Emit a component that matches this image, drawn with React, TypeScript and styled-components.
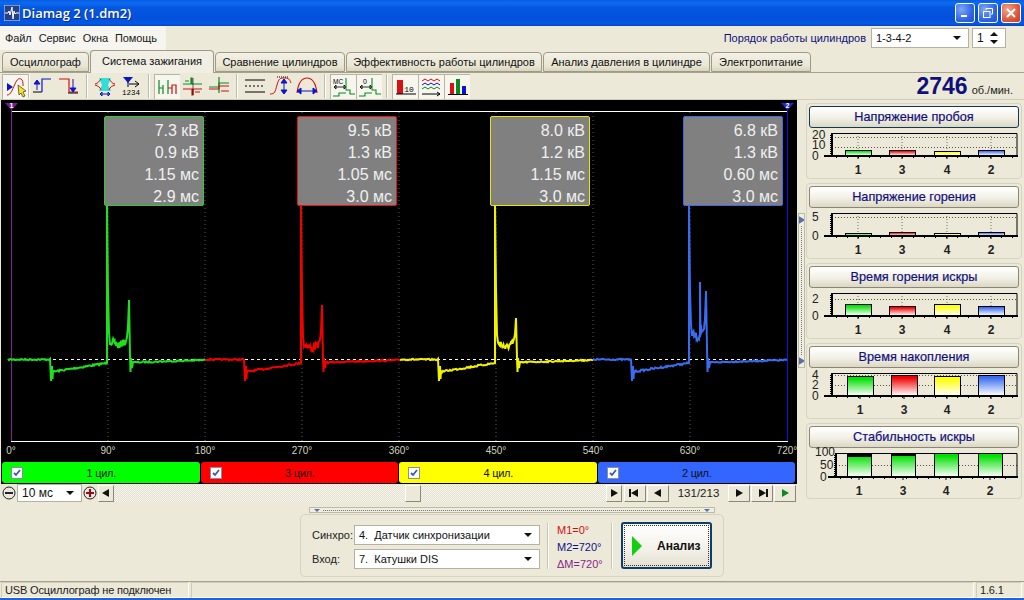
import React from "react";
import styled, { createGlobalStyle } from "styled-components";

const GlobalStyle = createGlobalStyle`
  html, body {
    margin: 0;
    padding: 0;
    background: #ece9d8;
  }
  * {
    box-sizing: border-box;
  }
`;

const FONT = `"Liberation Sans", Arial, sans-serif`;

const Window = styled.div`
  width: 1024px;
  height: 600px;
  overflow: hidden;
  display: flex;
  flex-direction: column;
  background: #ece9d8;
  font-family: ${FONT};
  font-size: 11px;
  color: #111;
  border-bottom: 2px solid #1f64d8;
`;

const TitleBar = styled.div`
  height: 26px;
  flex: none;
  display: flex;
  align-items: center;
  padding: 0 3px 0 4px;
  gap: 2px;
  background: linear-gradient(180deg, #0a5ce0 0%, #0b6bf2 12%, #0557e0 30%, #0350dc 70%, #0459e6 90%, #0346c4 100%);
`;

const TitleText = styled.div`
  flex: 1;
  color: #fff;
  font-family: "Open Sans", sans-serif;
  font-weight: 600;
  font-size: 13px;
  text-shadow: 1px 1px 0 #0a2f90;
`;

const CaptionButton = styled.div<{ $close?: boolean }>`
  width: 20px;
  height: 20px;
  border: 1px solid #fff;
  border-radius: 3px;
  display: flex;
  align-items: center;
  justify-content: center;
  background: ${(p) =>
    p.$close
      ? "radial-gradient(circle at 30% 30%, #f0a58c, #e0583a 60%, #c53a1a)"
      : "radial-gradient(circle at 30% 30%, #7fa6f5, #2f66e4 60%, #2450c8)"};
`;

const CaptionRow = styled.div`
  display: flex;
  gap: 3px;
`;

const HeaderRow = styled.div`
  height: 24px;
  flex: none;
  display: flex;
  align-items: center;
`;

const MenuBar = styled.div`
  width: 166px;
  height: 24px;
  display: flex;
  align-items: center;
  gap: 7px;
  padding-left: 5px;
  background: #f6f5f0;
`;

const MenuItem = styled.span`
  font-size: 11px;
  letter-spacing: -0.1px;
  color: #1a1a1a;
`;

const OrderBlock = styled.div`
  margin-left: auto;
  margin-right: 18px;
  display: flex;
  align-items: center;
`;

const OrderLabel = styled.span`
  color: #10107c;
  font-size: 11px;
  margin-right: 5px;
`;

const Combo = styled.div<{ $w: number; $h?: number; $size?: number }>`
  width: ${(p) => p.$w}px;
  height: ${(p) => p.$h ?? 20}px;
  background: #fff;
  border: 1px solid #b5b2a4;
  display: flex;
  align-items: center;
  justify-content: space-between;
  padding: 0 5px 0 4px;
  font-size: ${(p) => p.$size ?? 11}px;
  color: #111;
`;

const DownMark = styled.span`
  width: 0;
  height: 0;
  border-left: 4px solid transparent;
  border-right: 4px solid transparent;
  border-top: 4px solid #111;
  margin-right: 2px;
`;

const SpinBox = styled(Combo)`
  margin-left: 3px;
`;

const SpinMarks = styled.div`
  display: flex;
  flex-direction: column;
  gap: 4px;
`;

const UpMark = styled.span`
  width: 0;
  height: 0;
  border-left: 4px solid transparent;
  border-right: 4px solid transparent;
  border-bottom: 4px solid #111;
  margin-right: 2px;
`;

const TabStrip = styled.div`
  height: 22px;
  flex: none;
  display: flex;
  align-items: flex-end;
  padding-left: 2px;
  gap: 1px;
  position: relative;
  z-index: 1;
`;

const Tab = styled.div<{ $w: number; $active?: boolean }>`
  width: ${(p) => p.$w}px;
  height: ${(p) => (p.$active ? 23 : 20)}px;
  margin-bottom: ${(p) => (p.$active ? -1 : 0)}px;
  display: flex;
  align-items: center;
  justify-content: center;
  padding-bottom: ${(p) => (p.$active ? 3 : 0)}px;
  border: 1px solid #9d9a86;
  border-bottom: ${(p) => (p.$active ? "none" : "1px solid #9d9a86")};
  border-radius: 4px 4px 0 0;
  background: ${(p) => (p.$active ? "#f1efe4" : "linear-gradient(180deg,#f3f1e6 0%,#e9e6d4 70%,#d8d4bd 100%)")};
  font-size: 11px;
  white-space: nowrap;
`;

const ToolRow = styled.div`
  height: 28px;
  flex: none;
  display: flex;
  align-items: center;
  padding-left: 2px;
  border-top: 1px solid #a5a28e;
  border-bottom: 1px solid #cfccb9;
`;

const ToolGroup = styled.div`
  display: flex;
`;

const ToolButton = styled.div<{ $on?: boolean }>`
  width: 26px;
  height: 25px;
  display: flex;
  align-items: center;
  justify-content: center;
  background: ${(p) => (p.$on ? "#f6f5ee" : "transparent")};
  ${(p) => (p.$on ? "border-left:1px solid #b8b5a4;border-top:1px solid #b8b5a4;" : "")}
`;

const ToolSep = styled.div<{ $tight?: boolean }>`
  width: 2px;
  height: 24px;
  margin: 0 ${(p) => (p.$tight ? 0 : 4)}px;
  border-left: 1px solid #bdbaa8;
  border-right: 1px solid #fff;
`;

const Rpm = styled.div`
  margin-left: auto;
  margin-right: 11px;
  display: flex;
  align-items: baseline;
  gap: 4px;
`;

const RpmValue = styled.span`
  font-size: 23px;
  font-weight: 700;
  color: #10107c;
`;

const RpmUnit = styled.span`
  font-size: 11px;
  color: #222;
`;

const MainRow = styled.div`
  height: 402px;
  flex: none;
  display: flex;
`;

const LeftColumn = styled.div`
  width: 797px;
  flex: none;
  padding-left: 1px;
  display: flex;
  flex-direction: column;
`;

const Scope = styled.div`
  background: #000;
  height: 384px;
  flex: none;
  display: flex;
  flex-direction: column;
`;

const PlotArea = styled.div`
  position: relative;
  height: 342px;
  flex: none;
`;

const PlotSvg = styled.svg`
  display: block;
`;

const ValueBox = styled.div<{ $left: number; $color: string }>`
  position: absolute;
  left: ${(p) => p.$left}px;
  top: 16px;
  width: 100px;
  height: 90px;
  background: #808080;
  border: 1px solid ${(p) => p.$color};
  border-radius: 2px;
  padding: 3px 4px 0 0;
  color: #f0f0f0;
  font-size: 16px;
  line-height: 22px;
  text-align: right;
`;

const AxisRow = styled.div`
  height: 20px;
  flex: none;
  display: flex;
  justify-content: space-between;
  align-items: center;
  padding-bottom: 4px;
`;

const AxisLabel = styled.span`
  width: 20px;
  display: flex;
  justify-content: center;
  white-space: nowrap;
  font-size: 10px;
  color: #cfd6bd;
`;

const ChannelRow = styled.div`
  height: 21px;
  flex: none;
  display: flex;
  gap: 1px;
  padding: 0 2px 0 1px;
`;

const Channel = styled.div<{ $bg: string }>`
  flex: 1;
  display: flex;
  align-items: center;
  background: ${(p) => p.$bg};
  border-radius: 3px;
  padding-left: 9px;
`;

const CheckMark = styled.div`
  width: 12px;
  height: 12px;
  background: #fff;
  border: 1px solid #8a8f9c;
  display: flex;
  align-items: center;
  justify-content: center;
`;

const ChannelName = styled.span`
  flex: 1;
  text-align: center;
  padding-right: 20px;
  font-size: 11px;
  letter-spacing: -0.3px;
  color: #111;
`;

const ControlRow = styled.div`
  height: 18px;
  flex: none;
  display: flex;
  align-items: center;
  padding-right: 1px;
`;

const RoundButton = styled.div`
  width: 15px;
  height: 17px;
  margin-right: 1px;
  display: flex;
  align-items: center;
  justify-content: center;
  flex: none;
`;

const RaisedButton = styled.div<{ $w: number }>`
  width: ${(p) => p.$w}px;
  height: 17px;
  flex: none;
  display: flex;
  align-items: center;
  justify-content: center;
  background: #ece9d8;
  border-top: 1px solid #fff;
  border-left: 1px solid #fff;
  border-right: 1px solid #8a887a;
  border-bottom: 1px solid #8a887a;
`;

const ScrollTrack = styled.div`
  flex: 1;
  height: 17px;
  display: flex;
  padding-left: 291px;
  background: repeating-conic-gradient(#f6f5ee 0% 25%, #e4e1d1 0% 50%) 0 0 / 2px 2px;
`;

const NavGroup = styled.div`
  display: flex;
  align-items: center;
  gap: 1px;
  margin-left: 2px;
`;

const Counter = styled.div`
  width: 57px;
  flex: none;
  text-align: center;
  font-size: 11.5px;
  color: #222;
`;

const SideStrip = styled.div`
  width: 9px;
  flex: none;
  display: flex;
  align-items: center;
  padding-left: 1px;
`;

const Grip = styled.div`
  width: 7px;
  height: 155px;
  margin-top: -22px;
  background: #f0eee2;
  border: 1px solid #bdbaa8;
  display: flex;
  flex-direction: column;
  justify-content: space-between;
  align-items: center;
  overflow: hidden;
`;

const GripDots = styled.div`
  flex: 1;
  width: 1px;
  background: repeating-linear-gradient(180deg, #77756a 0 1px, transparent 1px 2px);
`;

const SidePanel = styled.div`
  flex: 1;
  padding: 3px 2px 0 0;
  display: flex;
  flex-direction: column;
  gap: 4px;
`;

const Group = styled.div`
  height: 76px;
  flex: none;
  border: 1px solid #d6d3c2;
  border-radius: 4px;
  padding: 2px;
  display: flex;
  flex-direction: column;
`;

const GroupButton = styled.div<{ $focus?: boolean }>`
  height: 22px;
  flex: none;
  display: flex;
  align-items: center;
  justify-content: center;
  border: 1px solid ${(p) => (p.$focus ? "#123a5c" : "#8a8776")};
  border-radius: 3px;
  background: linear-gradient(180deg, #fff 0%, #f2f0e6 55%, #dcd8c4 100%);
  color: #10107c;
  font-size: 12.7px;
  -webkit-text-stroke: 0.2px #10107c;
`;

const ChartSvg = styled.svg`
  display: block;
  flex: none;
  overflow: visible;
`;

const BottomArea = styled.div`
  height: 80px;
  flex: none;
  display: flex;
  flex-direction: column;
  align-items: center;
  padding-top: 5px;
  border-bottom: 1px solid #a5a28e;
`;

const HSplitter = styled.div`
  width: 406px;
  height: 6px;
  flex: none;
  background: #f0eee2;
  border: 1px solid #bdbaa8;
  display: flex;
  align-items: center;
  padding: 0 4px;
  gap: 3px;
`;

const HDots = styled.div`
  flex: 1;
  height: 1px;
  background: repeating-linear-gradient(90deg, #77756a 0 1px, transparent 1px 2px);
`;

const DownTiny = styled.span`
  width: 0;
  height: 0;
  border-left: 3px solid transparent;
  border-right: 3px solid transparent;
  border-top: 3px solid #5a6ea8;
`;

const ControlPanel = styled.div`
  width: 424px;
  height: 63px;
  flex: none;
  margin-top: 1px;
  border: 1px solid #d6d3c2;
  border-radius: 5px;
  display: flex;
  align-items: center;
  padding-left: 11px;
`;

const FormColumn = styled.div`
  width: 235px;
  flex: none;
  display: flex;
  flex-direction: column;
  gap: 4px;
  margin-top: 3px;
`;

const FormRow = styled.div`
  display: flex;
  align-items: center;
`;

const FormLabel = styled.span`
  width: 42px;
  flex: none;
  font-size: 11px;
  color: #222;
`;

const PanelSep = styled.div`
  width: 2px;
  height: 46px;
  flex: none;
  border-left: 1px solid #c9c6b4;
  border-right: 1px solid #fff;
`;

const MarkerColumn = styled.div`
  width: 62px;
  flex: none;
  padding-left: 8px;
  padding-top: 3px;
  display: flex;
  flex-direction: column;
  gap: 2px;
`;

const MarkerText = styled.span<{ $color: string }>`
  font-size: 11px;
  line-height: 15px;
  color: ${(p) => p.$color};
  white-space: nowrap;
`;

const AnalyzeButton = styled.div`
  width: 91px;
  height: 47px;
  flex: none;
  margin-left: 8px;
  border: 2px solid #123a6c;
  border-radius: 3px;
  background: linear-gradient(180deg, #fff 0%, #f3f1e8 60%, #e4e1d0 100%);
  display: flex;
  align-items: center;
  padding-left: 8px;
  outline: 1px dotted #333;
  outline-offset: -4px;
  font-weight: 700;
  font-size: 12px;
  gap: 14px;
`;

const StatusBar = styled.div`
  height: 16px;
  flex: 1;
  display: flex;
  gap: 2px;
  padding: 0 2px 0 1px;
`;

const StatusPane = styled.div<{ $w?: number }>`
  ${(p) => (p.$w ? `width:${p.$w}px;flex:none;` : "flex:1;")}
  border: 1px solid #cfccb9;
  border-right-color: #fff;
  border-bottom-color: #fff;
  display: flex;
  align-items: center;
  padding-left: 3px;
  font-size: 11px;
  letter-spacing: -0.15px;
  color: #222;
`;

// --- traces ---

type Cyl = {
  color: string;
  start: number;
  end: number;
  dwell: number;
  spark: number;
  sparkEnd: number;
  plateau: number;
  peak: number;
  extra?: [number, number][];
};

const CYLS: Cyl[] = [
  { color: "#1fe01f", start: 8, end: 205, dwell: 51, spark: 107, sparkEnd: 130, plateau: 341, peak: 300 },
  { color: "#f00000", start: 205, end: 400, dwell: 245, spark: 301, sparkEnd: 323, plateau: 344, peak: 305 },
  { color: "#f2f200", start: 400, end: 593, dwell: 439, spark: 495, sparkEnd: 517, plateau: 343, peak: 318 },
  {
    color: "#3a6cf0",
    start: 593,
    end: 787,
    dwell: 632,
    spark: 689,
    sparkEnd: 707,
    plateau: 333,
    peak: 291,
    extra: [[700, 282], [701, 325], [703, 330]],
  },
];

let seed = 7;
const rnd = (amp: number) => {
  seed = (seed * 16807) % 2147483647;
  return ((seed / 2147483647) * 2 - 1) * amp;
};

const buildTrace = (c: Cyl) => {
  const pts: [number, number][] = [];
  for (let x = c.start; x < c.dwell; x += 1) pts.push([x, 359.5 + rnd(0.7)]);
  pts.push([c.dwell, 381], [c.dwell + 1, 366], [c.dwell + 1.5, 379], [c.dwell + 2, 371]);
  for (let x = c.dwell + 3; x < c.spark; x += 1) {
    const t = (x - c.dwell) / (c.spark - c.dwell);
    pts.push([x, 372 - 9 * t + rnd(0.9)]);
  }
  pts.push([c.spark, 363], [c.spark, 205], [c.spark + 1, 290], [c.spark + 2, c.plateau - 8]);
  const mid = c.spark + (c.sparkEnd - c.spark) / 2;
  for (let x = c.spark + 3; x < c.sparkEnd - 4; x += 0.5) {
    const u = 1 - Math.abs(x - mid) / ((c.sparkEnd - c.spark) / 2);
    pts.push([x, c.plateau + 5 * u * u + rnd(3.5)]);
    (c.extra ?? []).forEach(([ex, ey]) => {
      if (Math.abs(x - ex) < 0.3) pts.push([ex, ey]);
    });
  }
  const rise = (c.plateau - c.peak) * 0.35;
  pts.push([c.sparkEnd - 3, c.plateau - 4], [c.sparkEnd - 2, c.plateau - rise], [c.sparkEnd - 1, c.peak]);
  pts.push([c.sparkEnd, c.plateau + 15], [c.sparkEnd + 0.5, 372], [c.sparkEnd + 1, 358], [c.sparkEnd + 2, 368], [c.sparkEnd + 3, 362]);
  for (let x = c.sparkEnd + 4; x <= c.end; x += 1) {
    const t = (x - c.sparkEnd) / (c.end - c.sparkEnd);
    pts.push([x, 362.5 - 2.5 * t + rnd(0.7)]);
  }
  return pts.map(([x, y]) => `${x},${y.toFixed(1)}`).join(" ");
};

const TRACES = CYLS.map((c) => ({ color: c.color, points: buildTrace(c) }));
const GRID = [108, 205, 302, 399, 496, 593, 690];

const Plot = () => (
  <PlotSvg width={796} height={342} viewBox="1 100 796 342">
    <line x1={11} x2={788} y1={111.5} y2={111.5} stroke="#fff" />
    <line x1={11} x2={788} y1={441.5} y2={441.5} stroke="#fff" />
    {GRID.map((x) => (
      <line key={x} x1={x} x2={x} y1={112} y2={441} stroke="#5c5c5c" strokeDasharray="1 3" />
    ))}
    <line x1={11.5} x2={11.5} y1={108} y2={441} stroke="#8a1f8a" />
    <line x1={787.5} x2={787.5} y1={108} y2={441} stroke="#1010e0" />
    <polygon points="5,103 18,103 11.5,110" fill="#7a1f8f" />
    <polygon points="781,103 794,103 787.5,110" fill="#1c2cc8" />
    <text x={11.5} y={108} fontSize={7} fontWeight={700} fill="#fff" textAnchor="middle" fontFamily="Liberation Sans">
      1
    </text>
    <text x={787.5} y={108} fontSize={7} fontWeight={700} fill="#fff" textAnchor="middle" fontFamily="Liberation Sans">
      2
    </text>
    <line x1={11} x2={787} y1={359.5} y2={359.5} stroke="#fff" strokeDasharray="3 3" />
    {TRACES.map((t) => (
      <polyline key={t.color} points={t.points} fill="none" stroke={t.color} strokeWidth={2} />
    ))}
  </PlotSvg>
);

// --- side charts ---

type Chart = {
  title: string;
  focus?: boolean;
  left: number;
  top: number;
  bottom: number;
  ticks: [string, number, number][];
  grid: number[];
  tops: number[];
  barX: number[];
  barW: number;
  labelX: number[];
  colors: string[];
  caps?: number[];
};

const CYL_COLORS = ["#00e000", "#f00000", "#ffff00", "#3a6cf0"];
const BAR_X = [845, 889, 934, 978];
const LABEL_X = [858, 902, 947, 991];

const CHARTS: Chart[] = [
  {
    title: "Напряжение пробоя",
    focus: true,
    left: 832,
    top: 30,
    bottom: 53,
    ticks: [["20", 32, 812], ["10", 42, 812], ["0", 53, 812]],
    grid: [34, 44],
    tops: [47, 47, 48, 47],
    barX: BAR_X,
    barW: 27,
    labelX: LABEL_X,
    colors: CYL_COLORS,
  },
  {
    title: "Напряжение горения",
    left: 832,
    top: 30,
    bottom: 53,
    ticks: [["5", 34, 812], ["0", 53, 812]],
    grid: [34],
    tops: [50, 49, 50, 49],
    barX: BAR_X,
    barW: 27,
    labelX: LABEL_X,
    colors: CYL_COLORS,
  },
  {
    title: "Время горения искры",
    left: 832,
    top: 30,
    bottom: 53,
    ticks: [["2", 36, 812], ["0", 53, 812]],
    grid: [36],
    tops: [41, 43, 41, 43],
    barX: BAR_X,
    barW: 27,
    labelX: LABEL_X,
    colors: CYL_COLORS,
  },
  {
    title: "Время накопления",
    left: 832,
    top: 30,
    bottom: 53,
    ticks: [["4", 32, 812], ["2", 42, 812], ["0", 53, 812]],
    grid: [32, 42],
    tops: [33, 32, 33, 32],
    barX: [847, 891, 934, 978],
    barW: 27,
    labelX: [860, 904, 947, 991],
    colors: CYL_COLORS,
  },
  {
    title: "Стабильность искры",
    left: 836,
    top: 30,
    bottom: 54,
    ticks: [["100", 29, 815], ["50", 42, 820], ["0", 54, 820]],
    grid: [30, 42],
    tops: [30, 30, 30, 30],
    caps: [6, 4, 0, 0],
    barX: [847, 891, 934, 978],
    barW: 25,
    labelX: [859, 903, 946, 990],
    colors: ["#00e000", "#00e000", "#00e000", "#00e000"],
  },
];

const MiniChart = ({ chart, id }: { chart: Chart; id: number }) => {
  const minorX: number[] = [];
  for (let x = chart.left + 4; x < 1016; x += 11) minorX.push(x);
  const minorY: number[] = [];
  for (let y = chart.top + 2; y < chart.bottom; y += 2) minorY.push(y);
  return (
    <ChartSvg width={210} height={49} viewBox="809 25 210 49">
      <defs>
        {chart.colors.map((c, i) => (
          <linearGradient key={i} id={`g${id}-${i}`} x1="0" y1="0" x2="0" y2="1">
            <stop offset="0.1" stopColor={c} />
            <stop offset="1" stopColor="#fff" />
          </linearGradient>
        ))}
      </defs>
      {chart.barX.map((x, i) => (
        <line key={i} x1={chart.labelX[i]} x2={chart.labelX[i]} y1={chart.top} y2={chart.bottom} stroke="#77756a" strokeDasharray="1 2" />
      ))}
      {chart.grid.map((y) => (
        <line key={y} x1={chart.left} x2={1017} y1={y + 0.5} y2={y + 0.5} stroke="#55534a" strokeDasharray="1 2" />
      ))}
      <path
        d={`M${chart.left + 0.5} ${chart.bottom}V${chart.top + 0.5}H1017V${chart.bottom}`}
        fill="none"
        stroke="#000"
        strokeWidth={1}
      />
      <line x1={chart.left - 8} x2={1018} y1={chart.bottom} y2={chart.bottom} stroke="#000" strokeWidth={2} />
      <line x1={chart.left} x2={chart.left} y1={chart.top} y2={chart.bottom} stroke="#000" strokeWidth={2} />
      {minorX.map((x) => (
        <line key={x} x1={x + 0.5} x2={x + 0.5} y1={chart.bottom} y2={chart.bottom + 2} stroke="#000" />
      ))}
      {minorY.map((y) => (
        <line key={y} x1={chart.left - 2} x2={chart.left} y1={y + 0.5} y2={y + 0.5} stroke="#000" />
      ))}
      {chart.barX.map((x, i) => (
        <g key={i}>
          <rect
            x={x + 0.5}
            y={chart.tops[i] + 0.5}
            width={chart.barW - 1}
            height={chart.bottom - chart.tops[i] - 1}
            fill={`url(#g${id}-${i})`}
            stroke="#000"
          />
          {chart.caps && chart.caps[i] > 0 && (
            <rect x={x} y={chart.tops[i]} width={chart.barW} height={chart.caps[i] / 2 + 1} fill="#000" />
          )}
          <line x1={chart.labelX[i]} x2={chart.labelX[i]} y1={chart.bottom} y2={chart.bottom + 3} stroke="#000" />
          <text
            x={chart.labelX[i]}
            y={chart.bottom + 18}
            fontSize={12}
            fontWeight={700}
            textAnchor="middle"
            fontFamily="Liberation Sans"
            fill="#222"
          >
            {["1", "3", "4", "2"][i]}
          </text>
        </g>
      ))}
      {chart.ticks.map(([label, y, x]) => (
        <text key={label} x={x} y={y + 4} fontSize={12} fontFamily="Liberation Sans" fill="#222">
          {label}
        </text>
      ))}
    </ChartSvg>
  );
};

// --- toolbar icons ---

const Ico = ({ children }: { children: React.ReactNode }) => (
  <svg width={24} height={22} viewBox="0 0 24 22" fill="none">
    {children}
  </svg>
);

const R = "#d01010";
const B = "#0a14c8";
const G = "#0c8a20";
const K = "#000";

const ICONS: React.ReactNode[] = [
  <>
    <path d="M3 19C7 19 8 14 11 8 13 3 15 2 17 3c2 1 2 4 2 7" stroke={R} />
    <path d="M3 7l6 4-6 4z" fill={B} />
    <path d="M14 9l1 10 2-2 2 4 2-1-2-4 3-1z" fill="#ffe020" stroke="#333" strokeWidth={0.7} />
  </>,
  <>
    <path d="M6 6v9M3 9l3-4 3 4z" stroke={B} fill={B} />
    <path d="M2 17h9" stroke={K} />
    <path d="M11 17V4h9" stroke={B} strokeWidth={1.2} />
  </>,
  <>
    <path d="M2 4h10v13h9" stroke={R} strokeWidth={1.2} />
    <path d="M16 4v9M13 13l3 4 3-4z" stroke={B} fill={B} />
    <path d="M11 18h10" stroke={K} />
  </>,
  <>
    <path d="M6 3h12l-3 7 3 6H6l3-6z" fill="#30e0d8" />
    <path d="M2 9c3 0 4-3 6-5M22 9c-3 0-4-3-6-5M2 10c3 1 5 2 6 5M22 10c-3 1-5 2-6 5" stroke={R} />
    <path d="M7 19h10M7 19l2-2v4zM17 19l-2-2v4z" stroke={B} />
  </>,
  <>
    <path d="M4 2h10l-5 6z" fill={B} />
    <path d="M9 7v5M10 9h9M16 6l4 3-4 3" stroke={K} />
    <text x={12} y={20} fontSize={7.5} fill={K} textAnchor="middle" fontFamily="Liberation Mono">
      1234
    </text>
  </>,
  <>
    <path d="M3 18V4M3 12h4v6M7 18V9" stroke={G} strokeWidth={1.2} />
    <path d="M12 12h4v6M16 18V9h4v9" stroke={R} strokeWidth={1.2} />
    <path d="M12 18V4" stroke={G} strokeWidth={1.2} />
  </>,
  <>
    <path d="M2 9h8V3h1v6h10M4 6h4" stroke={G} strokeWidth={1.2} />
    <path d="M2 14h9v6h1v-6h9M14 17h5" stroke={R} strokeWidth={1.2} />
    <path d="M12 3v17" stroke={K} strokeWidth={0.6} />
  </>,
  <>
    <path d="M12 2v16" stroke={G} strokeWidth={1.2} />
    <path d="M2 12h10V8h10" stroke={G} strokeWidth={1.2} />
    <path d="M2 14h10v-3h10M14 16h8" stroke={R} strokeWidth={1.2} />
  </>,
  <>
    <path d="M2 5h20M2 17h20" stroke={K} />
    <path d="M2 11h20" stroke={K} strokeDasharray="2 2" />
  </>,
  <>
    <path d="M1 19c5 0 5-2 7-9S11 3 16 3s5 3 6 5" stroke={R} />
    <path d="M8 2h12" stroke={K} strokeDasharray="1 1" />
    <path d="M15 6v11M12 8l3-4 3 4zM12 15l3 4 3-4z" stroke={B} fill={B} />
  </>,
  <>
    <path d="M2 18C3 10 6 3 12 3s9 7 10 15" stroke={R} strokeWidth={1.2} />
    <path d="M5 16h14M2 16l4-3v6zM22 16l-4-3v6z" stroke={B} fill={B} />
  </>,
  <>
    <text x={1} y={8} fontSize={6.5} fill={K} fontFamily="Liberation Sans">
      MC
    </text>
    <path d="M2 11h12M2 11l2-2v4zM14 11l-2-2v4z" stroke={K} strokeWidth={0.8} />
    <path d="M14 2v12h4v4h5M1 20h6v-3h7" stroke={G} strokeWidth={1.1} />
  </>,
  <>
    <text x={7} y={8} fontSize={7} fill={K} textAnchor="middle" fontFamily="Liberation Sans">
      0
    </text>
    <path d="M2 11h12M2 11l2-2v4zM14 11l-2-2v4z" stroke={K} strokeWidth={0.8} />
    <path d="M14 2v12h4v4h5M1 20h6v-3h7" stroke={G} strokeWidth={1.1} />
  </>,
  <>
    <rect x={3} y={4} width={6} height={14} fill="#d81010" />
    <path d="M2 18h20" stroke={K} />
    <text x={15} y={16} fontSize={8} fill={K} textAnchor="middle" fontFamily="Liberation Mono">
      10
    </text>
  </>,
  <>
    <path d="M2 5l3-2 3 2 3-2 3 2 3-2 3 2" stroke={R} />
    <path d="M2 9l3-2 3 2 3-2 3 2 3-2 3 2" stroke={B} />
    <path d="M2 13l3-2 3 2 3-2 3 2 3-2 3 2" stroke={G} />
    <path d="M2 18h18M17 16l3 2-3 2" stroke={K} />
  </>,
  <>
    <rect x={4} y={7} width={4} height={11} fill="#d81010" />
    <rect x={10} y={3} width={4} height={15} fill="#0c8a20" />
    <rect x={16} y={10} width={4} height={8} fill="#0a14c8" />
    <path d="M2 18.5h20" stroke={K} />
  </>,
];

const TOOL_GROUPS: { ids: number[]; on: number[]; tight?: boolean }[] = [
  { ids: [0], on: [0], tight: true },
  { ids: [1, 2], on: [] },
  { ids: [3, 4], on: [] },
  { ids: [5, 6, 7], on: [5] },
  { ids: [8, 9, 10], on: [] },
  { ids: [11, 12], on: [11, 12] },
  { ids: [13, 14, 15], on: [13, 14, 15] },
];

const TABS: [string, number, boolean?][] = [
  ["Осциллограф", 87],
  ["Система зажигания", 124, true],
  ["Сравнение цилиндров", 130],
  ["Эффективность работы цилиндров", 196],
  ["Анализ давления в цилиндре", 167],
  ["Электропитание", 100],
];

const BOXES = [
  { left: 103, color: "#35c835", lines: ["7.3 кВ", "0.9 кВ", "1.15 мс", "2.9 мс"] },
  { left: 296, color: "#f01010", lines: ["9.5 кВ", "1.3 кВ", "1.05 мс", "3.0 мс"] },
  { left: 489, color: "#e8e800", lines: ["8.0 кВ", "1.2 кВ", "1.15 мс", "3.0 мс"] },
  { left: 682, color: "#3a6cf0", lines: ["6.8 кВ", "1.3 кВ", "0.60 мс", "3.0 мс"] },
];

const CHANNELS: [string, string][] = [
  ["#00ff00", "1 цил."],
  ["#ff0000", "3 цил."],
  ["#ffff00", "4 цил."],
  ["#3366ff", "2 цил."],
];

const Tri = ({ dir, color = "#111", bar, size = 14 }: { dir: "l" | "r"; color?: string; bar?: boolean; size?: number }) => (
  <svg width={size} height={12} viewBox={`${(14 - size) / 2} 0 ${size} 12`}>
    {dir === "r" ? <path d="M4 2l7 4-7 4z" fill={color} /> : <path d="M10 2L3 6l7 4z" fill={color} />}
    {bar && <rect x={dir === "r" ? 11 : 1} y={2} width={2} height={8} fill={color} />}
  </svg>
);

function App() {
  return (
    <Window>
      <GlobalStyle />
      <TitleBar>
        <svg width={16} height={16} viewBox="0 0 16 16">
          <rect width={16} height={16} fill="#24408c" stroke="#dfe6f8" />
          <path d="M1 8h3l1-2 1 4 2-8 1 12 1-8 1 3 1-1h3" stroke="#fff" fill="none" />
        </svg>
        <TitleText>Diamag 2 (1.dm2)</TitleText>
        <CaptionRow>
          <CaptionButton>
            <svg width={12} height={12} viewBox="0 0 12 12">
              <rect x={2} y={8} width={6} height={2} fill="#fff" />
            </svg>
          </CaptionButton>
          <CaptionButton>
            <svg width={12} height={12} viewBox="0 0 12 12" fill="none" stroke="#fff">
              <path d="M4 3V1.5h6.5V7H9" />
              <rect x={1.5} y={4.5} width={6.5} height={6} />
            </svg>
          </CaptionButton>
          <CaptionButton $close>
            <svg width={12} height={12} viewBox="0 0 12 12" stroke="#fff" strokeWidth={2}>
              <path d="M2 2l8 8M10 2l-8 8" />
            </svg>
          </CaptionButton>
        </CaptionRow>
      </TitleBar>

      <HeaderRow>
        <MenuBar>
          {["Файл", "Сервис", "Окна", "Помощь"].map((m) => (
            <MenuItem key={m}>{m}</MenuItem>
          ))}
        </MenuBar>
        <OrderBlock>
          <OrderLabel>Порядок работы цилиндров</OrderLabel>
          <Combo $w={98}>
            1-3-4-2
            <DownMark />
          </Combo>
          <SpinBox $w={34} $size={12}>
            1
            <SpinMarks>
              <UpMark />
              <DownMark />
            </SpinMarks>
          </SpinBox>
        </OrderBlock>
      </HeaderRow>

      <TabStrip>
        {TABS.map(([name, w, active]) => (
          <Tab key={name} $w={w} $active={active}>
            {name}
          </Tab>
        ))}
      </TabStrip>

      <ToolRow>
        {TOOL_GROUPS.map((g, i) => (
          <React.Fragment key={i}>
            {i > 0 && <ToolSep $tight={TOOL_GROUPS[i - 1].tight} />}
            <ToolGroup>
              {g.ids.map((id) => (
                <ToolButton key={id} $on={g.on.includes(id)}>
                  <Ico>{ICONS[id]}</Ico>
                </ToolButton>
              ))}
            </ToolGroup>
          </React.Fragment>
        ))}
        <Rpm>
          <RpmValue>2746</RpmValue>
          <RpmUnit>об./мин.</RpmUnit>
        </Rpm>
      </ToolRow>

      <MainRow>
        <LeftColumn>
          <Scope>
            <PlotArea>
              <Plot />
              {BOXES.map((b) => (
                <ValueBox key={b.left} $left={b.left} $color={b.color}>
                  {b.lines.map((l) => (
                    <div key={l}>{l}</div>
                  ))}
                </ValueBox>
              ))}
            </PlotArea>
            <AxisRow>
              {["0°", "90°", "180°", "270°", "360°", "450°", "540°", "630°", "720°"].map((a) => (
                <AxisLabel key={a}>{a}</AxisLabel>
              ))}
            </AxisRow>
            <ChannelRow>
              {CHANNELS.map(([bg, name]) => (
                <Channel key={name} $bg={bg}>
                  <CheckMark>
                    <svg width={10} height={10} viewBox="0 0 10 10">
                      <path d="M2 5l2 2 4-5" stroke="#3a5cb0" strokeWidth={1.8} fill="none" />
                    </svg>
                  </CheckMark>
                  <ChannelName>{name}</ChannelName>
                </Channel>
              ))}
            </ChannelRow>
          </Scope>
          <ControlRow>
            <RoundButton>
              <svg width={14} height={14} viewBox="0 0 14 14">
                <circle cx={7} cy={7} r={6} fill="#ece9d8" stroke="#223" />
                <rect x={3} y={6} width={8} height={2} fill="#223" />
              </svg>
            </RoundButton>
            <Combo $w={65} $h={18} $size={12}>
              10 мс
              <DownMark />
            </Combo>
            <RoundButton>
              <svg width={14} height={14} viewBox="0 0 14 14">
                <circle cx={7} cy={7} r={6} fill="#ece9d8" stroke="#223" />
                <path d="M3 7h8M7 3v8" stroke="#8a1020" strokeWidth={2.2} />
              </svg>
            </RoundButton>
            <RaisedButton $w={16}>
              <Tri dir="l" />
            </RaisedButton>
            <ScrollTrack>
              <RaisedButton $w={16} />
            </ScrollTrack>
            <RaisedButton $w={16}>
              <Tri dir="r" />
            </RaisedButton>
            <NavGroup>
              <RaisedButton $w={22}>
                <Tri dir="l" bar />
              </RaisedButton>
              <RaisedButton $w={22}>
                <Tri dir="l" />
              </RaisedButton>
              <Counter>131/213</Counter>
              <RaisedButton $w={22}>
                <Tri dir="r" />
              </RaisedButton>
              <RaisedButton $w={22}>
                <Tri dir="r" bar />
              </RaisedButton>
              <RaisedButton $w={22}>
                <Tri dir="r" color="#0c8a20" />
              </RaisedButton>
            </NavGroup>
          </ControlRow>
        </LeftColumn>
        <SideStrip>
          <Grip>
            <Tri dir="r" color="#5a6ea8" size={5} />
            <GripDots />
            <Tri dir="r" color="#5a6ea8" size={5} />
          </Grip>
        </SideStrip>
        <SidePanel>
          {CHARTS.map((c, i) => (
            <Group key={c.title}>
              <GroupButton $focus={c.focus}>{c.title}</GroupButton>
              <MiniChart chart={c} id={i} />
            </Group>
          ))}
        </SidePanel>
      </MainRow>

      <BottomArea>
        <HSplitter>
          <DownTiny />
          <HDots />
          <DownTiny />
        </HSplitter>
        <ControlPanel>
          <FormColumn>
            <FormRow>
              <FormLabel>Синхро:</FormLabel>
              <Combo $w={186}>
                4.&nbsp; Датчик синхронизации
                <DownMark />
              </Combo>
            </FormRow>
            <FormRow>
              <FormLabel>Вход:</FormLabel>
              <Combo $w={186}>
                7.&nbsp; Катушки DIS
                <DownMark />
              </Combo>
            </FormRow>
          </FormColumn>
          <PanelSep />
          <MarkerColumn>
            <MarkerText $color="#d01010">M1=0°</MarkerText>
            <MarkerText $color="#10108c">M2=720°</MarkerText>
            <MarkerText $color="#8a1f8a">ΔM=720°</MarkerText>
          </MarkerColumn>
          <PanelSep />
          <AnalyzeButton>
            <svg width={12} height={20} viewBox="0 0 12 20">
              <path d="M1 0l10 10L1 20z" fill="#10d010" />
            </svg>
            Анализ
          </AnalyzeButton>
        </ControlPanel>
      </BottomArea>

      <StatusBar>
        <StatusPane $w={188}>USB Осциллограф не подключен</StatusPane>
        <StatusPane />
        <StatusPane $w={46}>1.6.1</StatusPane>
      </StatusBar>
    </Window>
  );
}

export default App;
